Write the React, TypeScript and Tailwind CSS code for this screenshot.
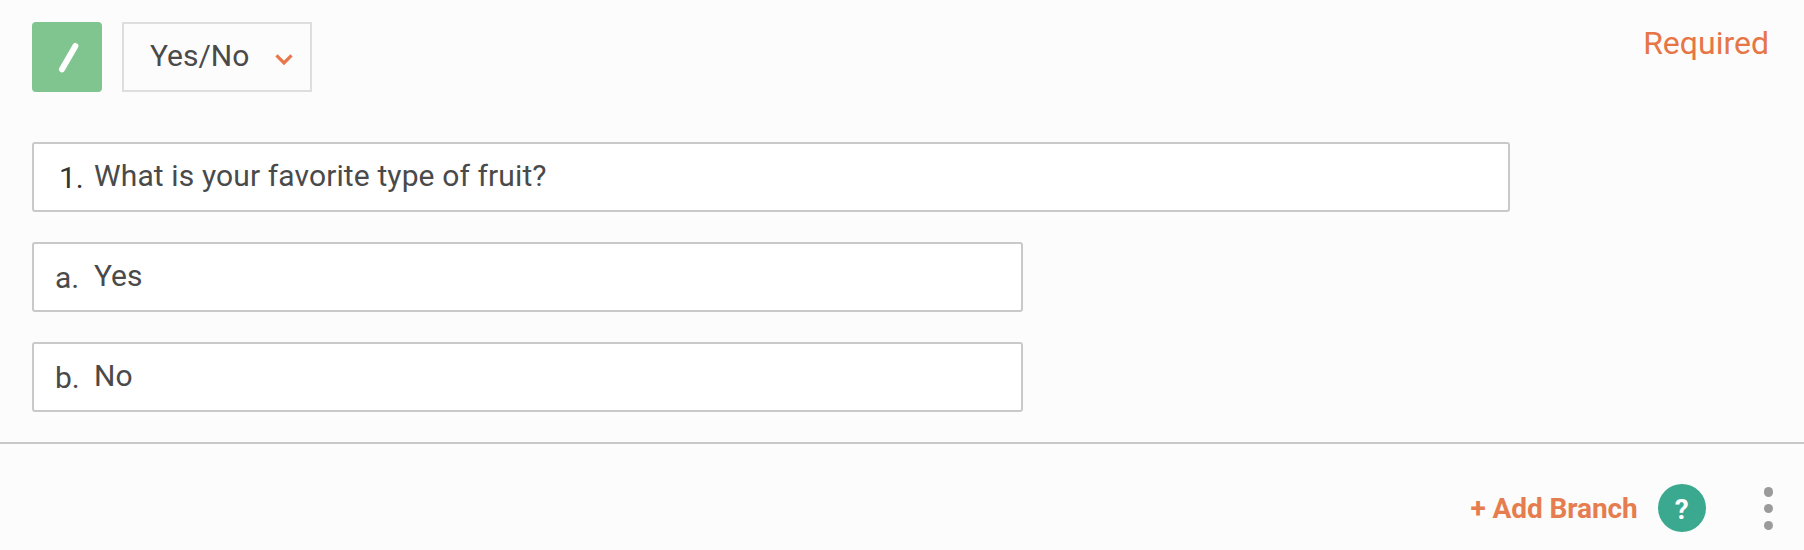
import React from "react";

type FieldProps = {
  label: string;
  value: string;
  labelClass: string;
  valueClass: string;
  className: string;
};

function Field({ label, value, labelClass, valueClass, className }: FieldProps) {
  return (
    <div className={`flex h-[70px] rounded-[3px] border-2 border-[#c9c9c9] bg-white text-[30px] leading-[35px] whitespace-nowrap ${className}`}>
      <span className={`w-[60px] shrink-0 pt-[16px] ${labelClass}`}>{label}</span>
      <span className={`pt-[14px] text-[#4a4a4a] ${valueClass}`}>{value}</span>
    </div>
  );
}

export default function App() {
  return (
    <div className="flex h-[550px] w-[1804px] flex-col overflow-hidden bg-[#fcfcfc] font-['Roboto',sans-serif] text-[#4a4a4a]">
      <section className="h-[444px] border-b-2 border-[#c9c9c9] px-8 pt-[22px]">
        <header className="flex h-[70px] items-start">
          <div className="flex size-[70px] items-center justify-center rounded-[4px] bg-[#80c48f]">
            <svg width="70" height="70" viewBox="0 0 70 70" fill="none">
              <path d="M43.4 24 30 47.3" stroke="#fff" strokeWidth="6" strokeLinecap="round" />
            </svg>
          </div>
          <button className="ml-5 flex h-[70px] w-[190px] border-2 border-[#dedede] pt-[14px] pl-[26px] text-[30px] leading-[35px]">
            <span className="w-[125px] text-left">Yes/No</span>
            <svg className="mt-[15px]" width="20" height="14" viewBox="0 0 20 14" fill="none">
              <path d="m1.500 2.300 7.500 7.600 7.500-7.600" stroke="#e8784a" strokeWidth="3.2" />
            </svg>
          </button>
          <span className="mt-[2px] mr-[3px] ml-auto text-[32px] leading-[38px] text-[#e67646]">Required</span>
        </header>
        <div className="mt-[50px] flex flex-col gap-[30px]">
          <Field className="w-[1478px]" label="1." value="What is your favorite type of fruit?" labelClass="pl-[25px] text-[#333]" valueClass="tracking-[0.12px]" />
          <Field className="w-[991px]" label="a." value="Yes" labelClass="pl-[21px]" valueClass="" />
          <Field className="w-[991px]" label="b." value="No" labelClass="pl-[21px]" valueClass="" />
        </div>
      </section>
      <footer className="flex justify-end pt-10 pr-[31px]">
        <button className="mt-px mr-[20px] h-12 text-[28px] leading-12 font-bold tracking-[-0.08px] whitespace-nowrap text-[#e67d4f]">+ Add Branch</button>
        <button className="size-12 rounded-full bg-[#3aa98f] pt-[2px] text-center text-[28px] leading-12 font-bold text-white">?</button>
        <button className="ml-[58px] flex h-12 flex-col gap-[7.4px] pt-[3.4px]">
          <span className="size-[9.3px] rounded-full bg-[#9b9b9b]" />
          <span className="size-[9.3px] rounded-full bg-[#9b9b9b]" />
          <span className="size-[9.3px] rounded-full bg-[#9b9b9b]" />
        </button>
      </footer>
    </div>
  );
}
